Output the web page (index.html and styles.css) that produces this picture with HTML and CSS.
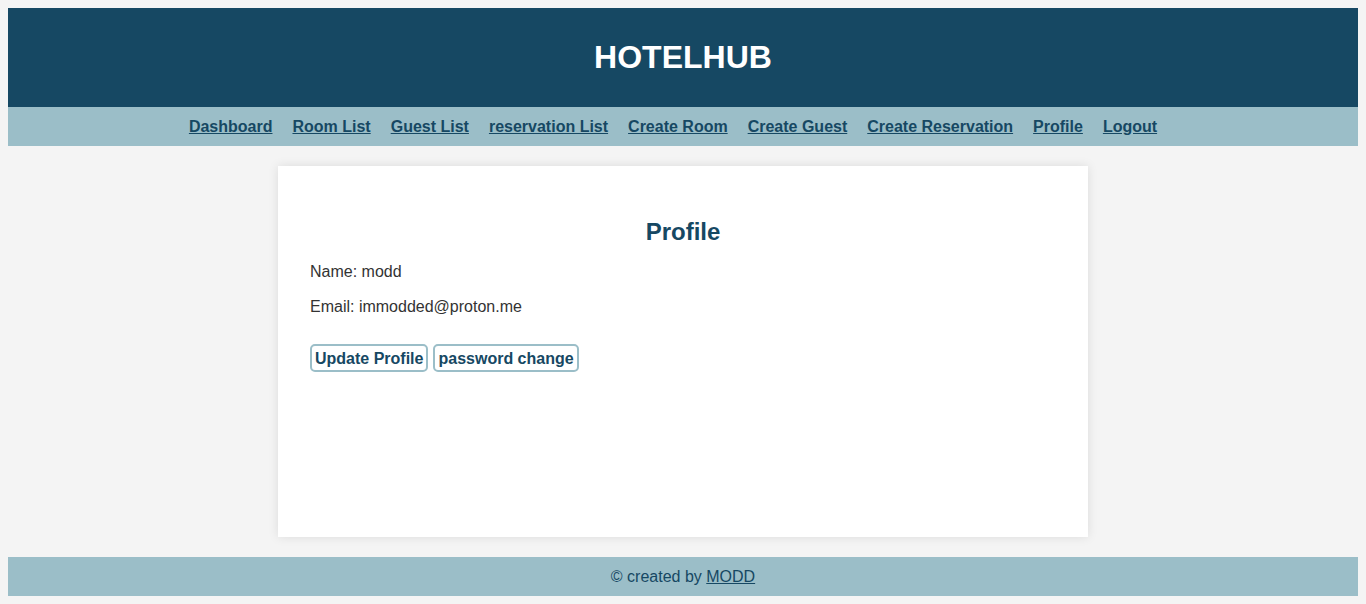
FILE: index.html
```html
<!DOCTYPE html>
<html lang="en">
<head>
<meta charset="utf-8">
<title>HotelHub - Profile</title>
<link rel="stylesheet" href="styles.css">
</head>
<body>
<header class="site-header">
  <h1 class="brand">HOTELHUB</h1>
</header>
<nav class="main-nav">
  <a href="#">Dashboard</a>
  <a href="#">Room List</a>
  <a href="#">Guest List</a>
  <a href="#">reservation List</a>
  <a href="#">Create Room</a>
  <a href="#">Create Guest</a>
  <a href="#">Create Reservation</a>
  <a href="#">Profile</a>
  <a href="#">Logout</a>
</nav>
<main class="card">
  <h2 class="card-title">Profile</h2>
  <p class="info">Name: modd</p>
  <p class="info">Email: immodded@proton.me</p>
  <div class="actions">
    <a class="btn" href="#">Update Profile</a>
    <a class="btn" href="#">password change</a>
  </div>
</main>
<footer class="site-footer">
  <span>&copy; created by <a href="#">MODD</a></span>
</footer>
</body>
</html>
```

FILE: styles.css
```css
* { box-sizing: border-box; }

body {
  margin: 8px;
  background: #f4f4f4;
  font-family: "Liberation Sans", Arial, sans-serif;
  font-size: 16px;
  color: #333;
}

.site-header {
  background: #164863;
  height: 99px;
  padding: 31px 0 0;
  text-align: center;
}

.brand {
  margin: 0;
  color: #fff;
  font-size: 32px;
  font-weight: bold;
  line-height: 37px;
}

.main-nav {
  background: #9bbec8;
  padding: 10px 0;
  display: flex;
  justify-content: center;
  line-height: 19px;
}

.main-nav a {
  color: #164863;
  font-weight: bold;
  text-decoration: underline;
  margin-right: 20px;
}

.card {
  display: block;
  width: 60%;
  min-height: 371px;
  margin: 20px auto;
  background: #fff;
  padding: 32px;
  box-shadow: 0 0 10px rgba(0, 0, 0, 0.1);
}

.card-title {
  margin: 20px 0 17px;
  text-align: center;
  color: #164863;
  font-size: 24px;
  line-height: 28px;
}

.info {
  margin: 0 0 17px;
  line-height: 18px;
}

.actions {
  display: flex;
  gap: 5px;
  margin-top: 28px;
}

.btn {
  display: inline-block;
  padding: 4px 3px 2px;
  border: 2px solid #9bbec8;
  border-radius: 5px;
  color: #164863;
  font-weight: bold;
  text-decoration: none;
  line-height: 18px;
  background: #fff;
}

.site-footer {
  background: #9bbec8;
  padding: 10px 0;
  line-height: 19px;
  text-align: center;
  color: #164863;
}

.site-footer a {
  color: #164863;
}
```
